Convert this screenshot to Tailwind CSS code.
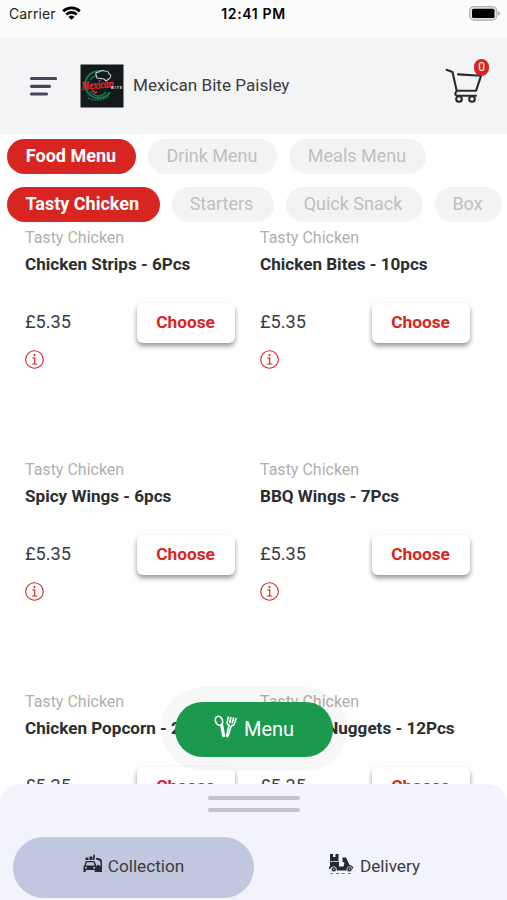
<!DOCTYPE html>
<html lang="en">
<head>
<meta charset="utf-8">
<title>Mexican Bite Paisley</title>
<script src="https://cdn.jsdelivr.net/npm/@tailwindcss/browser@4"></script>
</head>
<body class="bg-white">
<div class="relative flex h-[900px] w-[507px] flex-col overflow-hidden bg-white font-['Roboto',sans-serif] text-[#3a3c40] whitespace-nowrap">
  <div class="grid h-[38px] shrink-0 grid-cols-3 items-start bg-[#fbfbfb] px-[9px] pt-[4px] font-['Inter',sans-serif] text-black">
    <div class="flex h-[20px] items-center gap-[6px]">
      <span class="-mt-[2px] text-[14px] tracking-[0.1px] text-[#222]">Carrier</span>
      <svg class="-mt-[2px] h-[14px] w-[19px]" viewBox="0 0 19 14" fill="none" stroke="#000" stroke-width="2.7"><path d="M1.2 5.2a12 12 0 0 1 16.6 0M4.3 8.5a7.6 7.6 0 0 1 10.4 0"/><path d="M9.5 13.7 6.5 10.9a4.4 4.4 0 0 1 6 0z" fill="#000" stroke="none"/></svg>
    </div>
    <div class="h-[20px] text-center text-[14px] leading-[20px] font-semibold tracking-[0.65px]">12:41 PM</div>
    <svg class="mt-[2px] -mr-[3px] h-[15px] w-[32px] justify-self-end" viewBox="0 0 32 15"><rect x=".7" y=".7" width="27" height="13.3" rx="4" fill="#e5e5e5" stroke="#b4b4b4" stroke-width="1.3"/><rect x="3" y="2.7" width="22.5" height="9.3" rx="1.5"/><path d="M29 5q4 2.4 0 4.8z" fill="#aaa"/></svg>
  </div>

  <header class="flex h-[96px] shrink-0 items-center bg-[#f3f4f6] pl-[29px]">
    <svg class="h-[20px] w-[28px]" viewBox="0 0 28 20" fill="none" stroke="#47465c" stroke-width="3.2" stroke-linecap="round"><path d="M2.5 2.500H26.500M2.5 10.300H20.5M2.5 18H17.5"/></svg>
    <svg class="ml-[23px] h-[44px] w-[44px]" viewBox="0 0 44 44"><path d="M.5.5h43v43H.5z" fill="#14191b"/><g fill="none" stroke="#15794b"><path d="M30 28A13.5 13.5 0 1 1 27 10" stroke-width="2"/><path d="M26 28a9.5 9.5 0 0 1-16-1M10 16a10 10 0 0 1 6-4" stroke-width="1.5"/><path d="M8 34q10 5 21-2" stroke-width="1.5" stroke-dasharray="2 1"/></g><path d="m17 14-1-3q-1-3 3-3 2-2 6-1 4 0 4 3 3 1 1 4l-4 3-2-2z" fill="#14191b" stroke="#ccc" stroke-width="1.1"/><text x="2" y="26" transform="rotate(-5 2 26)" textLength="32" lengthAdjust="spacingAndGlyphs" font-family="Liberation Serif, serif" font-size="12" font-style="italic" font-weight="700" fill="#e32c30" stroke="#e32c30" stroke-width=".3">Mexican</text><path d="m12 26 3 3 2-1" stroke="#e32c30" stroke-width="1.5" fill="none"/><text x="31" y="24.5" textLength="11" font-family="Roboto, sans-serif" font-size="4" font-weight="700" fill="#ddd">BITE</text></svg>
    <h1 class="ml-[9px] text-[17.1px]">Mexican Bite Paisley</h1>
    <div class="relative ml-auto mr-[17px] h-[54px] w-[45px]">
      <svg class="absolute top-[9px] left-0 h-[38px] w-[40px]" viewBox="0 0 40 38" fill="none" stroke="#292b2d" stroke-width="2.1" stroke-linecap="round" stroke-linejoin="round"><path d="m1.5 1.8 6 2.2 4.2 18.8h19.3l5-15L13 6.400M11.7 22.8q-3.4 4.7 1 4.9H31"/><circle cx="14" cy="31" r="2.8"/><circle cx="27" cy="31" r="2.8"/></svg>
      <span class="absolute top-0 left-[29px] flex h-[17px] w-[15px] items-center justify-center rounded-full bg-[#d92522] pb-[1px] text-[12px] text-white">0</span>
    </div>
  </header>

  <nav class="mt-[5px] flex h-[35px] shrink-0 gap-[12px] pl-[7px] text-[18px] leading-[34px] text-[#c0c0c0]">
    <span class="w-[129px] shrink-0 rounded-full bg-[#d92522] pr-[1px] text-center font-bold text-white">Food Menu</span>
    <span class="w-[129px] shrink-0 rounded-full bg-[#f3f3f3] pr-[1px] text-center">Drink Menu</span>
    <span class="w-[137px] shrink-0 rounded-full bg-[#f3f3f3] pr-[1px] text-center">Meals Menu</span>
  </nav>
  <nav class="mt-[13px] flex h-[35px] shrink-0 gap-[12px] pl-[7px] text-[18px] leading-[34px] text-[#c0c0c0]">
    <span class="w-[152.5px] shrink-0 rounded-full bg-[#d92522] pr-[2px] text-center font-bold text-white">Tasty Chicken</span>
    <span class="w-[102px] shrink-0 rounded-full bg-[#f3f3f3] pr-[2px] text-center">Starters</span>
    <span class="w-[137px] shrink-0 rounded-full bg-[#f3f3f3] pr-[2px] text-center">Quick Snack</span>
    <span class="w-[67px] shrink-0 rounded-full bg-[#f3f3f3] pr-[1px] text-center">Box</span>
  </nav>

  <main id="items" class="grid shrink-0 grid-cols-[235px_235px] auto-rows-[232px] pt-[6px] pl-[25px]"></main>
  <template id="item">
    <article class="flex flex-col pr-[25px]">
      <p class="h-[20px] text-[16px] leading-[20px] text-[#b0b0b0]">Tasty Chicken</p>
      <h2 class="mt-[5px] h-[22px] text-[17.1px] leading-[22px] font-bold text-[#2c2d2f]"></h2>
      <div class="mt-[28px] flex h-[40px] items-center justify-between">
        <span class="-mt-[3px] text-[18.2px]">£5.35</span>
        <button class="h-[40px] w-[98px] rounded-[6px] bg-white pr-[1px] text-[17.3px] font-bold text-[#d92522] shadow-[0_3px_5px_rgba(0,0,0,0.42)]">Choose</button>
      </div>
      <svg class="mt-[6px] h-[20px] w-[20px]" viewBox="0 0 20 20" fill="none" stroke="#d92522"><circle cx="9.5" cy="10.5" r="8.8" stroke-width="1.1"/><path d="M7.5 8.9h2.2v6M7 15h5.3" stroke-width="1.2"/><circle cx="9.5" cy="6" r="1.1" fill="#d92522" stroke="none"/></svg>
    </article>
  </template>

  <div class="absolute top-[687px] left-[161px] flex h-[84px] w-[186px] items-center justify-center rounded-full bg-black/3">
    <button class="flex h-[55px] w-[158px] items-center justify-center gap-[7px] rounded-full bg-[#1b994f] text-[20px] text-white">
      <svg class="-mt-[6px] h-[23px] w-[23px]" viewBox="0 0 23 23" fill="none" stroke="#fff" stroke-width="1.6" stroke-linecap="round" stroke-linejoin="round"><ellipse cx="5" cy="5.8" rx="3.5" ry="4.6" transform="rotate(-22 5 5.8)"/><path d="m6.800 10 2.200 11.2q.8.900 1.400-.4L8.400 9.700M14.2 2l-1.1 6q0 1.500 2 2.200L12.500 21q.8 1.3 1.600 0l3.2-10.200q2.400.2 2.900-1.500L22 3.5M16.8 2.5l-1 5M19.5 3l-1.3 5"/></svg>
      <span>Menu</span>
    </button>
  </div>

  <section class="absolute top-[784px] left-0 flex h-[116px] w-[507px] flex-col items-center rounded-t-[20px] bg-[#f2f3fb] text-[17.2px]">
    <div class="mt-[12px] ml-[1px] flex h-[16px] w-[92px] flex-col justify-between"><i class="h-[4px] rounded-full bg-[#c3c4c9]"></i><i class="h-[4px] rounded-full bg-[#c3c4c9]"></i></div>
    <div class="mt-[25px] flex w-[507px] pl-[13px]">
      <div class="flex h-[61px] w-[241px] items-center justify-center gap-[4px] rounded-full bg-[#c0c7de] pr-[1px] pb-[2px]">
        <svg class="-mt-[5px] h-[20px] w-[22px]" viewBox="0 0 22 20" fill="#252833"><path d="M3.5 3.5h3V6h-3zM7.5 2.5h3V6h-3zM11.5 0l1.6 1.5L12.5 6h-1.5zM14 4q6.500-.5 6 5v9h-5l-1-3 1.500-4.500 3 1.500V9q0-3-4.500-3.500zM3.800 7h8.700l1.800 4.500.7 1.500v5h-2.300v-2H3.700v2H1.500v-5l.8-1.500z"/><path d="m4.800 8.300-1 3.200h8.700l-1-3.200z" fill="#c0c7de"/><circle cx="4" cy="13.800" r="1" fill="#c0c7de"/><circle cx="12.200" cy="13.800" r="1" fill="#c0c7de"/></svg>
        <span>Collection</span>
      </div>
      <div class="flex h-[61px] w-[240px] items-center justify-center gap-[6px] pb-[2px]">
        <svg class="-mt-[5px] h-[22px] w-[26px]" viewBox="0 0 26 22" fill="#252833"><path d="M2 1h8.500v7H2zM2 8.800h9v4.700h4.500l1-3.500-2-1.500V4.500H18L21.500 12q3 0 3.800 2.500l-.8 1.500-2.500-1-3 2.500H9L7 14.500 4 14 1 16.500q-.5-2 1-3.700z"/><path d="M5 1h2.500v3H5z" fill="#f2f3fb"/><circle cx="5.800" cy="16.300" r="2.600" stroke="#f2f3fb" stroke-width=".8"/><circle cx="21.500" cy="16.300" r="2.600" stroke="#f2f3fb" stroke-width=".8"/><circle cx="5.800" cy="16.300" r=".7" fill="#f2f3fb"/><circle cx="21.500" cy="16.300" r=".7" fill="#f2f3fb"/><path d="M2.500 20.500H5M8 20.500h3M13.500 20.500h3M20 20.500h3" stroke="#777984"/></svg>
        <span>Delivery</span>
      </div>
    </div>
  </section>
</div>
<script>
  const names = ['Chicken Strips - 6Pcs', 'Chicken Bites - 10pcs', 'Spicy Wings - 6pcs', 'BBQ Wings - 7Pcs', 'Chicken Popcorn - 20Pcs', 'Chicken Nuggets - 12Pcs'];
  const tpl = document.getElementById('item');
  for (const name of names) {
    const card = tpl.content.cloneNode(true);
    card.querySelector('h2').textContent = name;
    document.getElementById('items').append(card);
  }
</script>
</body>
</html>
